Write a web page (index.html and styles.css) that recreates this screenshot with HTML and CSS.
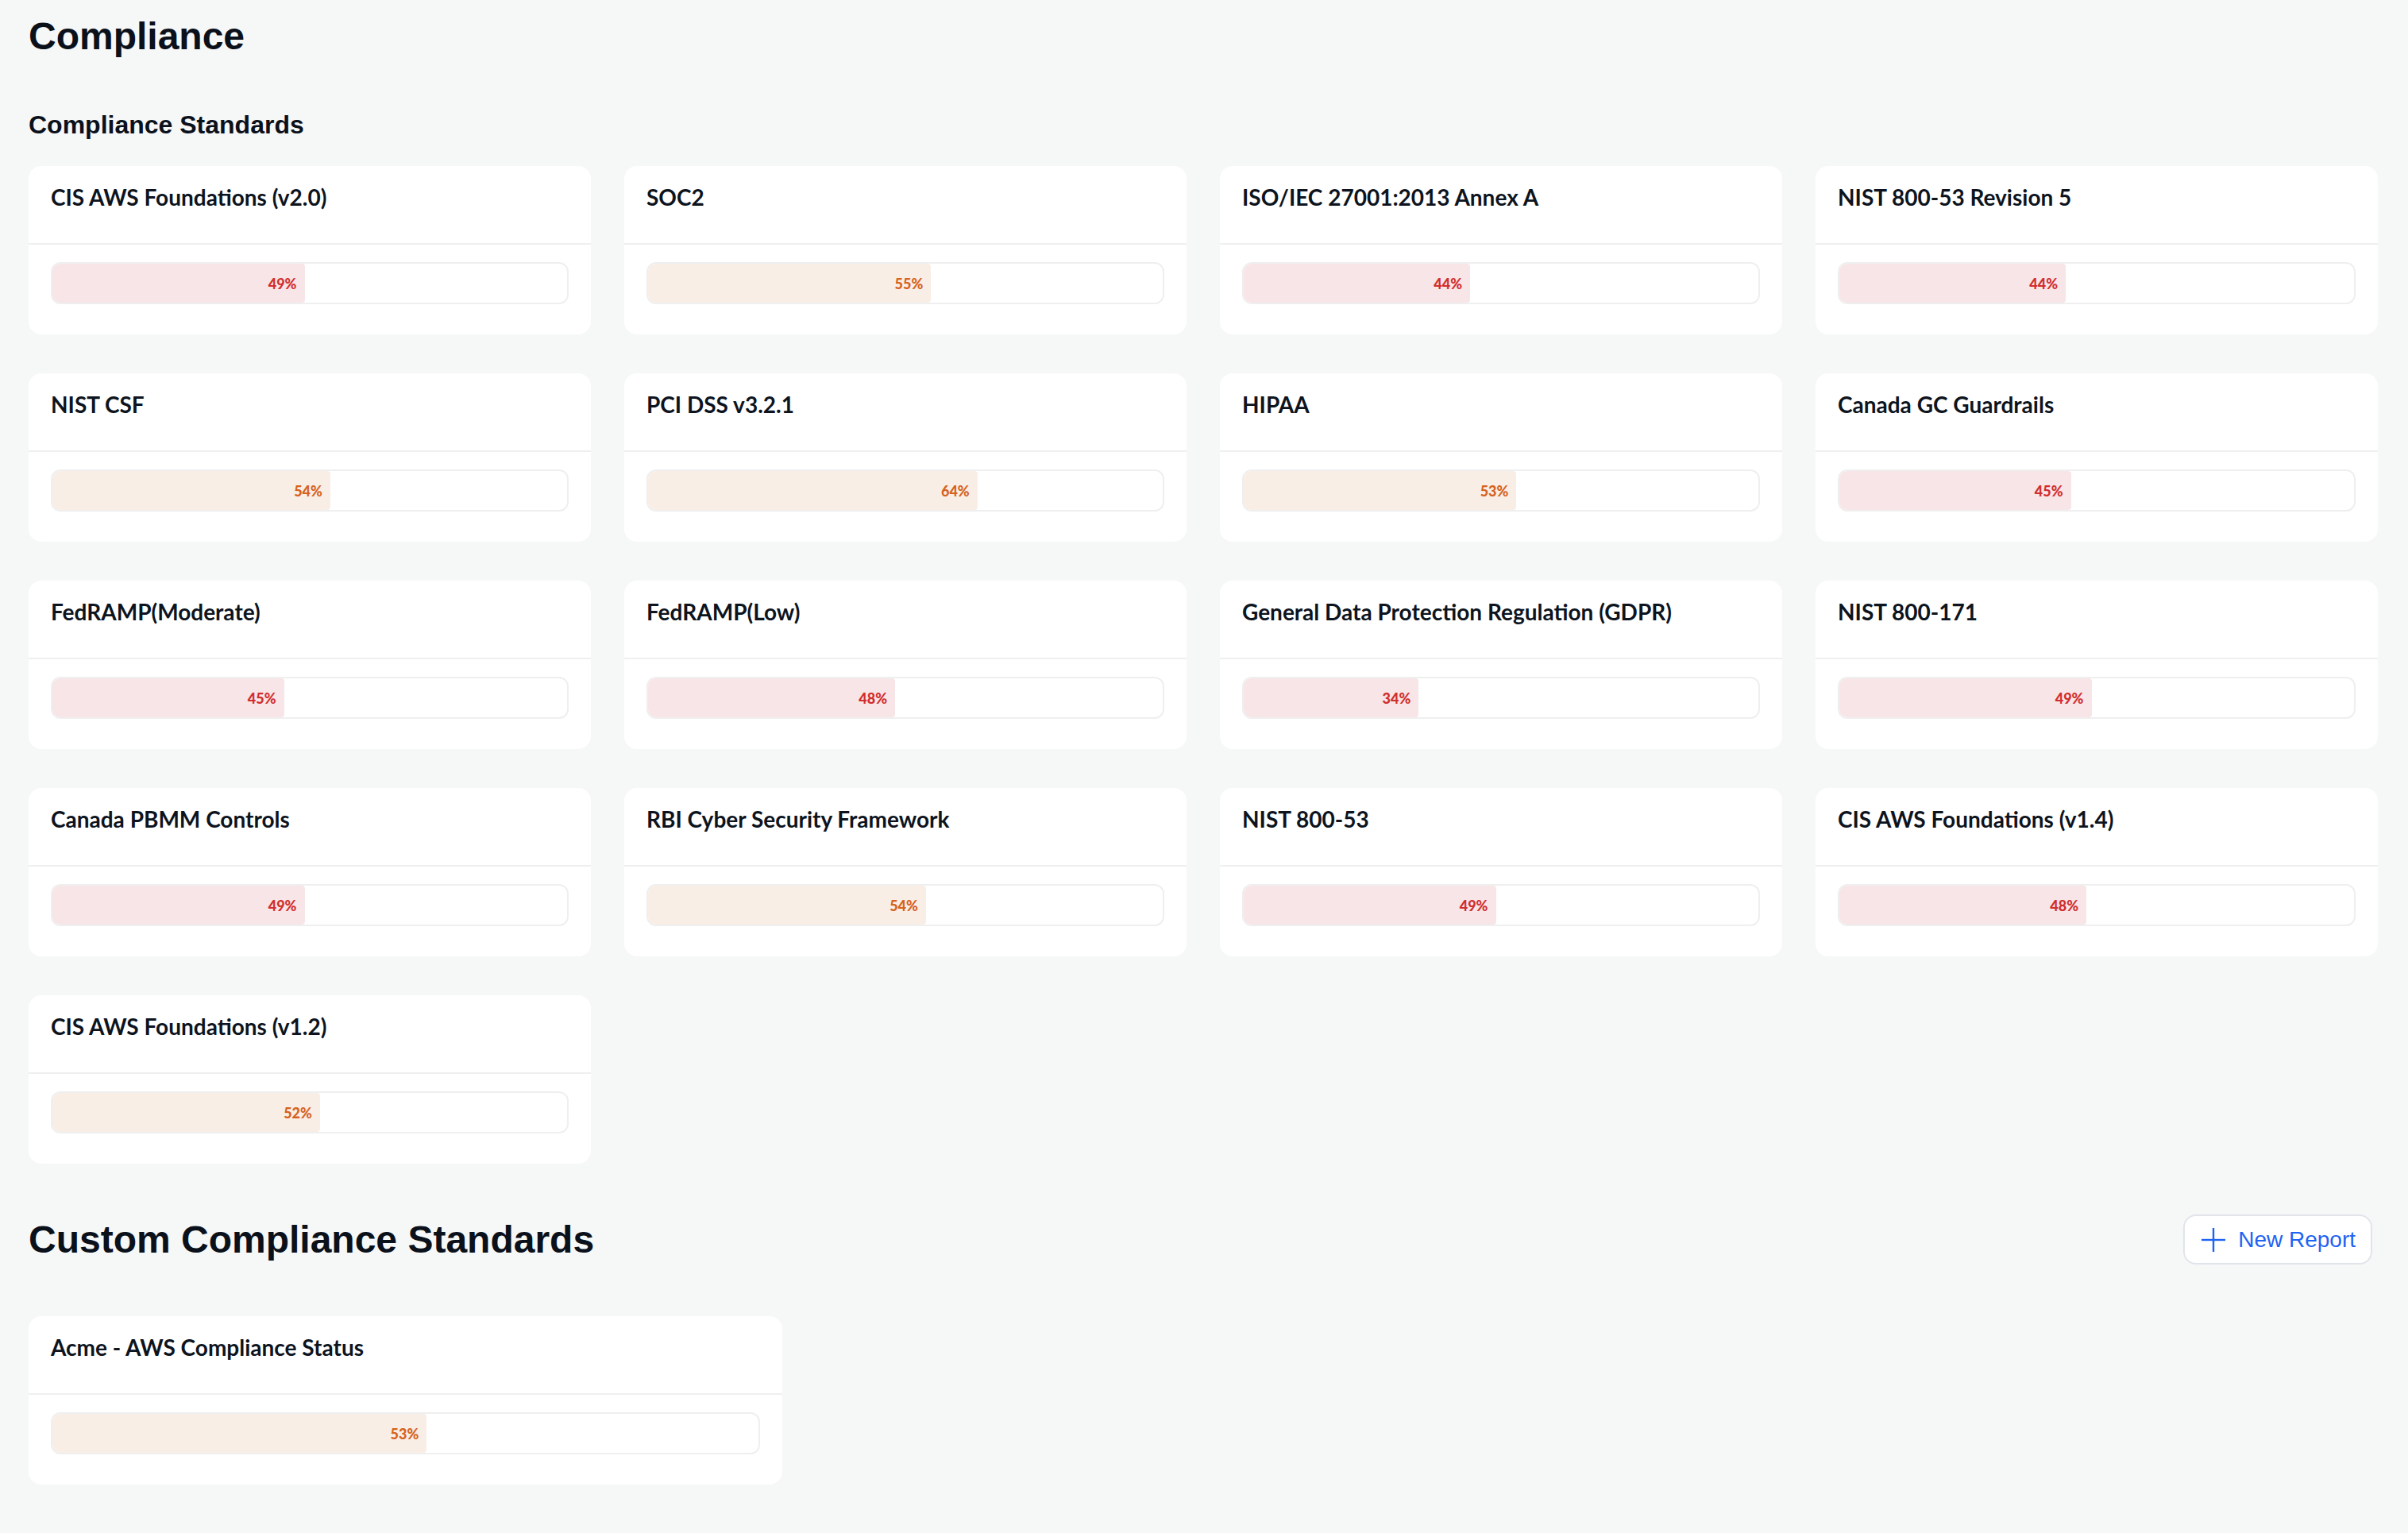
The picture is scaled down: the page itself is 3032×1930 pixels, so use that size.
FILE: index.html
```html
<!DOCTYPE html>
<html lang="en">
<head>
    <meta charset="UTF-8">
    <meta name="viewport" content="width=device-width, initial-scale=1.0">
    <title>Compliance</title>
    <link rel="stylesheet" href="styles.css">
</head>
<body>

<div class="page">
    <h1 class="page-title">Compliance</h1>

    <h2 class="section-title">Compliance Standards</h2>

    <div class="standards-grid">
        <div class="card">
            <div class="card-header">CIS AWS Foundations (v2.0)</div>
            <div class="card-body">
                <div class="progress"><div class="progress-fill low" style="width: 49%"><span>49%</span></div></div>
            </div>
        </div>
        <div class="card">
            <div class="card-header">SOC2</div>
            <div class="card-body">
                <div class="progress"><div class="progress-fill mid" style="width: 55%"><span>55%</span></div></div>
            </div>
        </div>
        <div class="card">
            <div class="card-header">ISO/IEC 27001:2013 Annex A</div>
            <div class="card-body">
                <div class="progress"><div class="progress-fill low" style="width: 44%"><span>44%</span></div></div>
            </div>
        </div>
        <div class="card">
            <div class="card-header">NIST 800-53 Revision 5</div>
            <div class="card-body">
                <div class="progress"><div class="progress-fill low" style="width: 44%"><span>44%</span></div></div>
            </div>
        </div>

        <div class="card">
            <div class="card-header">NIST CSF</div>
            <div class="card-body">
                <div class="progress"><div class="progress-fill mid" style="width: 54%"><span>54%</span></div></div>
            </div>
        </div>
        <div class="card">
            <div class="card-header">PCI DSS v3.2.1</div>
            <div class="card-body">
                <div class="progress"><div class="progress-fill mid" style="width: 64%"><span>64%</span></div></div>
            </div>
        </div>
        <div class="card">
            <div class="card-header">HIPAA</div>
            <div class="card-body">
                <div class="progress"><div class="progress-fill mid" style="width: 53%"><span>53%</span></div></div>
            </div>
        </div>
        <div class="card">
            <div class="card-header">Canada GC Guardrails</div>
            <div class="card-body">
                <div class="progress"><div class="progress-fill low" style="width: 45%"><span>45%</span></div></div>
            </div>
        </div>

        <div class="card">
            <div class="card-header">FedRAMP(Moderate)</div>
            <div class="card-body">
                <div class="progress"><div class="progress-fill low" style="width: 45%"><span>45%</span></div></div>
            </div>
        </div>
        <div class="card">
            <div class="card-header">FedRAMP(Low)</div>
            <div class="card-body">
                <div class="progress"><div class="progress-fill low" style="width: 48%"><span>48%</span></div></div>
            </div>
        </div>
        <div class="card">
            <div class="card-header">General Data Protection Regulation (GDPR)</div>
            <div class="card-body">
                <div class="progress"><div class="progress-fill low" style="width: 34%"><span>34%</span></div></div>
            </div>
        </div>
        <div class="card">
            <div class="card-header">NIST 800-171</div>
            <div class="card-body">
                <div class="progress"><div class="progress-fill low" style="width: 49%"><span>49%</span></div></div>
            </div>
        </div>

        <div class="card">
            <div class="card-header">Canada PBMM Controls</div>
            <div class="card-body">
                <div class="progress"><div class="progress-fill low" style="width: 49%"><span>49%</span></div></div>
            </div>
        </div>
        <div class="card">
            <div class="card-header">RBI Cyber Security Framework</div>
            <div class="card-body">
                <div class="progress"><div class="progress-fill mid" style="width: 54%"><span>54%</span></div></div>
            </div>
        </div>
        <div class="card">
            <div class="card-header">NIST 800-53</div>
            <div class="card-body">
                <div class="progress"><div class="progress-fill low" style="width: 49%"><span>49%</span></div></div>
            </div>
        </div>
        <div class="card">
            <div class="card-header">CIS AWS Foundations (v1.4)</div>
            <div class="card-body">
                <div class="progress"><div class="progress-fill low" style="width: 48%"><span>48%</span></div></div>
            </div>
        </div>

        <div class="card">
            <div class="card-header">CIS AWS Foundations (v1.2)</div>
            <div class="card-body">
                <div class="progress"><div class="progress-fill mid" style="width: 52%"><span>52%</span></div></div>
            </div>
        </div>
    </div>

    <div class="custom-header">
        <h1 class="page-title">Custom Compliance Standards</h1>
        <button class="new-report">
            <svg width="30" height="30" viewBox="0 0 30 30" fill="none" stroke="currentColor" stroke-width="2.4">
                <line x1="15" y1="0" x2="15" y2="30"/>
                <line x1="0" y1="15" x2="30" y2="15"/>
            </svg>
            New Report
        </button>
    </div>

    <div class="custom-grid">
        <div class="card">
            <div class="card-header">Acme - AWS Compliance Status</div>
            <div class="card-body">
                <div class="progress"><div class="progress-fill mid" style="width: 53%"><span>53%</span></div></div>
            </div>
        </div>
    </div>
</div>

</body>
</html>
```

FILE: styles.css
```css
body {
    margin: 0;
    background-color: #f6f7f7;
    font-family: 'Liberation Sans', Arial, sans-serif;
    color: #0b111b;
}

.page {
    padding: 18px 38px 0 36px;
}

.page-title {
    margin: 0;
    font-size: 48px;
    line-height: 56px;
    font-weight: bold;
}

.section-title {
    margin: 63px 0 0 0;
    font-size: 32px;
    line-height: 40px;
    font-weight: bold;
}

.standards-grid {
    display: grid;
    grid-template-columns: repeat(4, 1fr);
    gap: 49px 42px;
    margin-top: 32px;
}

.card {
    background-color: #fff;
    border-radius: 16px;
}

.card-header {
    box-sizing: border-box;
    height: 99px;
    padding: 22px 28px 0 28px;
    border-bottom: 2px solid #efeff0;
    font-family: 'Lato', sans-serif;
    font-weight: bold;
    font-size: 28px;
    line-height: 34px;
    color: #0d141e;
}

.card-body {
    padding: 22px 28px 38px 28px;
}

.progress {
    height: 53px;
    box-sizing: border-box;
    border: 2px solid #efefef;
    border-radius: 12px;
    overflow: hidden;
    background-color: #fff;
}

.progress-fill {
    height: 100%;
    display: flex;
    align-items: center;
    justify-content: flex-end;
    border-radius: 0 4px 4px 0;
    font-family: 'Lato', sans-serif;
    font-weight: 900;
    font-size: 18px;
}

.progress-fill span {
    padding-right: 10px;
}

.progress-fill.low {
    background-color: #f8e5e7;
    color: #d12e2e;
}

.progress-fill.mid {
    background-color: #f8eee6;
    color: #d6621e;
}

.custom-header {
    display: flex;
    align-items: center;
    justify-content: space-between;
    margin-top: 64px;
    padding-right: 7px;
}

.new-report {
    display: flex;
    align-items: center;
    gap: 16px;
    height: 63px;
    padding: 0 19px 0 21px;
    background-color: #fff;
    border: 2px solid #e2e4eb;
    border-radius: 16px;
    color: #1e63f3;
    font-family: 'Liberation Sans', Arial, sans-serif;
    font-size: 28px;
    cursor: pointer;
}

.custom-grid {
    display: grid;
    grid-template-columns: repeat(3, 1fr);
    column-gap: 55px;
    margin-top: 65px;
    padding-bottom: 60px;
}
```
